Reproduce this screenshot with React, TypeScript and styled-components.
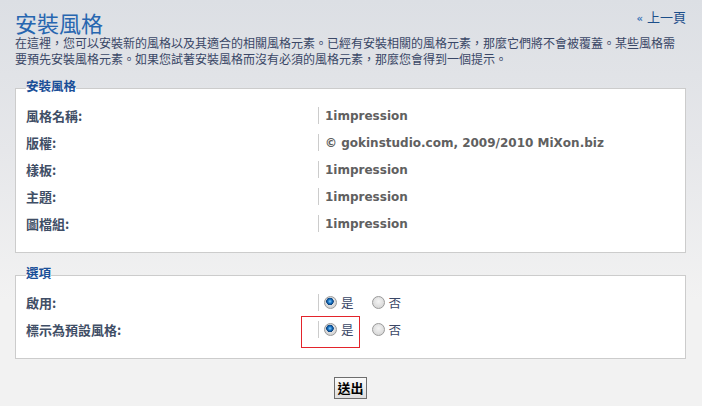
import React from 'react';
import styled, { createGlobalStyle } from 'styled-components';

const GlobalStyle = createGlobalStyle`
  html {
    background: #f2f2f2;
  }
  body {
    margin: 0;
    min-height: 406px;
    background: linear-gradient(to bottom, #dcdfe4 0, #e6e7ea 150px, #f2f2f2 300px);
    font-family: "Noto Sans CJK TC", "DejaVu Sans", sans-serif;
    font-size: 12px;
    color: #3a4766;
  }
`;

const Page = styled.div`
  padding: 10px 16px 8px 15px;
`;

const Header = styled.div`
  display: flex;
  justify-content: space-between;
  align-items: flex-start;
`;

const Title = styled.h2`
  margin: 0;
  font-size: 22px;
  line-height: 24px;
  font-weight: normal;
  color: #2766b0;
`;

const BackLink = styled.a`
  margin-top: -1px;
  font-size: 13px;
  line-height: 16px;
  color: #1b4e8a;
  text-decoration: none;
`;

const Arrow = styled.span`
  font-family: "DejaVu Sans", sans-serif;
  font-size: 10px;
  font-weight: bold;
  color: #3d76b8;
  margin-right: 4px;
`;

const Intro = styled.p`
  margin: 1px 0 0;
  padding-right: 8px;
  line-height: 15.5px;
`;

const Fieldset = styled.fieldset`
  margin: 13px 0 0;
  padding: 5px 10px 15px;
  border: 1px solid #cccccc;
  background: #ffffff;
`;

const Legend = styled.legend`
  padding: 0 0 4px;
  font-size: 12.5px;
  line-height: 14px;
  font-weight: bold;
  color: #1a4f98;
`;

const Row = styled.div`
  display: flex;
  padding: 5px 0;
`;

const Term = styled.div`
  width: 292px;
  flex-shrink: 0;
  font-size: 13px;
  font-weight: bold;
  line-height: 17px;
  color: #3f4e66;
`;

const Value = styled.div`
  position: relative;
  display: flex;
  align-items: center;
  height: 17px;
  padding-left: 6px;
  border-left: 1px solid #cccccc;
  font-family: "DejaVu Sans", "Noto Sans CJK TC", sans-serif;
  font-weight: bold;
  color: #606060;
`;

const Option = styled.label`
  display: flex;
  align-items: center;
  margin-right: 19px;
  font-family: "Noto Sans CJK TC", sans-serif;
  font-size: 12.5px;
  font-weight: normal;
  color: #3a4766;
`;

const Radio = styled.input.attrs({ type: 'radio' })`
  appearance: none;
  box-sizing: border-box;
  width: 13px;
  height: 13px;
  margin: 0 4px 0 -1px;
  border-radius: 50%;
  border: 1px solid #9a9a9a;
  background: radial-gradient(circle at 50% 40%, #f4f4f4 0, #d6d6d6 80%);

  &:checked {
    background:
      radial-gradient(circle at 45% 40%, #8fd0ff 0, #1874c4 2px, #0b3f7a 3.5px, transparent 4px),
      radial-gradient(circle at 50% 40%, #f4f4f4 0, #d0d0d0 80%);
  }
`;

const Highlight = styled.span`
  position: absolute;
  left: -18px;
  top: -5px;
  width: 59px;
  height: 32px;
  box-sizing: border-box;
  border: 1px solid #e3242b;
  pointer-events: none;
`;

const Actions = styled.div`
  display: flex;
  justify-content: center;
  margin-top: 18px;
`;

const SubmitButton = styled.button`
  height: 22px;
  padding: 0 2px;
  border: 1px solid #6e6e6e;
  background: linear-gradient(to bottom, #fafafa, #dedede);
  font-family: "Noto Sans CJK TC", sans-serif;
  font-size: 13px;
  font-weight: bold;
  line-height: 18px;
  color: #000000;
`;

const details = [
  { label: '風格名稱:', value: '1impression' },
  { label: '版權:', value: '© gokinstudio.com, 2009/2010 MiXon.biz' },
  { label: '樣板:', value: '1impression' },
  { label: '主題:', value: '1impression' },
  { label: '圖檔組:', value: '1impression' },
];

const YesNo = ({ name, marked }: { name: string; marked?: boolean }) => (
  <Value>
    {marked && <Highlight />}
    <Option>
      <Radio name={name} defaultChecked />是
    </Option>
    <Option>
      <Radio name={name} />否
    </Option>
  </Value>
);

const App = () => {
  return (
    <>
      <GlobalStyle />
      <Page>
        <Header>
          <Title>安裝風格</Title>
          <BackLink href="#">
            <Arrow>«</Arrow>上一頁
          </BackLink>
        </Header>
        <Intro>
          在這裡，您可以安裝新的風格以及其適合的相關風格元素。已經有安裝相關的風格元素，那麼它們將不會被覆蓋。某些風格需要預先安裝風格元素。如果您試著安裝風格而沒有必須的風格元素，那麼您會得到一個提示。
        </Intro>

        <Fieldset>
          <Legend>安裝風格</Legend>
          {details.map((d) => (
            <Row key={d.label}>
              <Term>{d.label}</Term>
              <Value>{d.value}</Value>
            </Row>
          ))}
        </Fieldset>

        <Fieldset>
          <Legend>選項</Legend>
          <Row>
            <Term>啟用:</Term>
            <YesNo name="style_active" />
          </Row>
          <Row>
            <Term>標示為預設風格:</Term>
            <YesNo name="style_default" marked />
          </Row>
        </Fieldset>

        <Actions>
          <SubmitButton type="submit">送出</SubmitButton>
        </Actions>
      </Page>
    </>
  );
};

export default App;
